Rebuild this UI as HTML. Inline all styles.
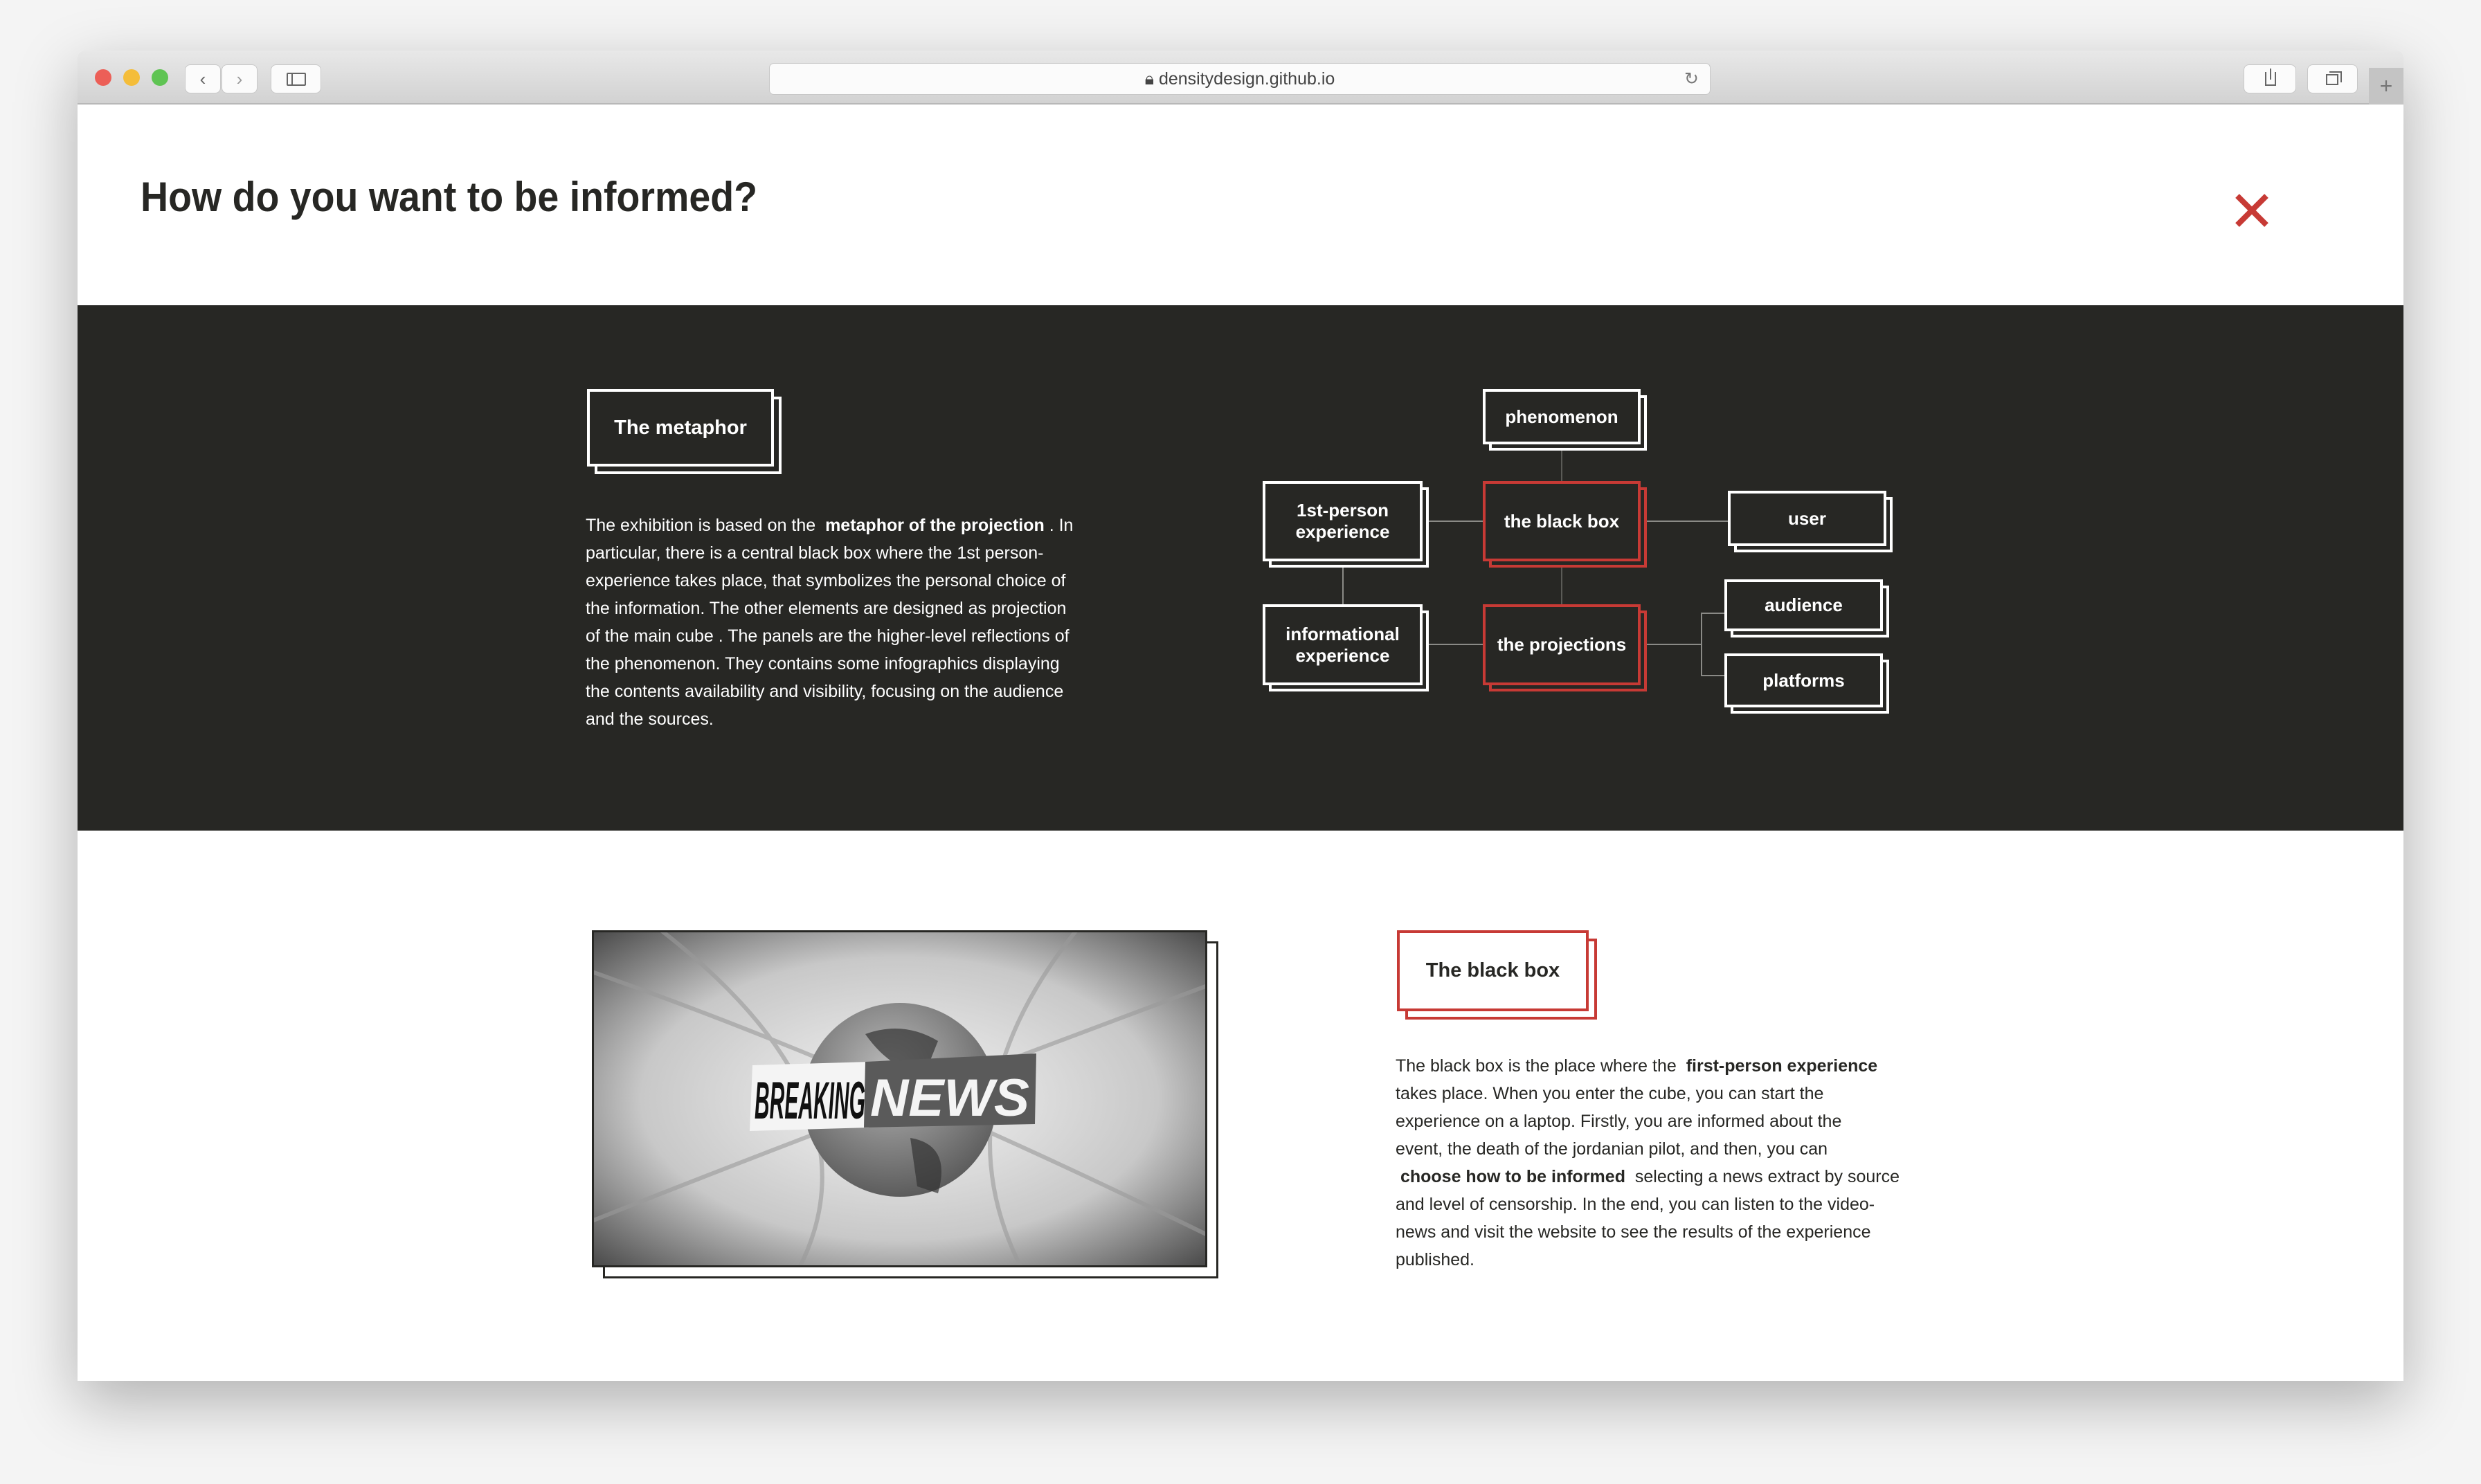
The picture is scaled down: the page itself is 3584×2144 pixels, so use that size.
<!DOCTYPE html>
<html><head><meta charset="utf-8"><style>
*{margin:0;padding:0;box-sizing:border-box}
body{width:3584px;height:2144px;background:#f4f4f4;position:relative;overflow:hidden;font-family:"Liberation Sans",sans-serif}
.abs{position:absolute}
.win{left:112px;top:73px;width:3360px;height:1922px;background:#fff;box-shadow:0 30px 90px rgba(0,0,0,.28);border-radius:10px 10px 0 0;overflow:hidden}
.tb{left:0;top:0;width:3360px;height:78px;background:linear-gradient(#e8e8e8,#d2d2d2);border-bottom:2px solid #b8b8b8}
.dot{width:24px;height:24px;border-radius:50%;top:27px}
.btn{background:#fbfbfb;border:1px solid #c8c8c8;border-radius:8px;height:42px;top:20px}
.dark{left:0;top:368px;width:3360px;height:759px;background:#272724}
.box{position:absolute;border:4px solid #fff;background:#272724;color:#fff;font-weight:bold;font-size:26px;text-align:center;display:flex;align-items:center;justify-content:center;line-height:31px}
.sh{position:absolute;border:4px solid #fff;background:#272724}
.red{border-color:#c73a35}
.ln{position:absolute;background:#8a8a86}
.p{font-size:25px;line-height:40px;white-space:nowrap}
</style></head><body>
<div class="abs win">
 <div class="abs tb">
  <div class="abs dot" style="left:25px;background:#ec5f57"></div>
  <div class="abs dot" style="left:66px;background:#f4bd3a"></div>
  <div class="abs dot" style="left:107px;background:#5fc453"></div>
  <div class="abs btn" style="left:155px;width:52px;font-size:26px;color:#666;text-align:center;line-height:40px">‹</div>
  <div class="abs btn" style="left:208px;width:52px;font-size:26px;color:#999;text-align:center;line-height:40px">›</div>
  <div class="abs btn" style="left:279px;width:73px"><div class="abs" style="left:22px;top:11px;width:28px;height:19px;border:2px solid #666;border-radius:2px"></div><div class="abs" style="left:29px;top:12px;width:2px;height:17px;background:#666"></div></div>
  <div class="abs btn" style="left:999px;width:1360px;top:18px;height:46px;border-radius:7px;text-align:center;font-size:25px;line-height:44px;color:#444">🔒︎ densitydesign.github.io<span class="abs" style="right:16px;top:0;color:#777">↻</span></div>
  <div class="abs btn" style="left:3129px;width:76px"><div class="abs" style="left:30px;top:10px;width:16px;height:20px;border:2px solid #666;border-top:none"></div><div class="abs" style="left:37px;top:5px;width:2px;height:16px;background:#666"></div></div>
  <div class="abs btn" style="left:3221px;width:73px"><div class="abs" style="left:26px;top:13px;width:18px;height:16px;border:2px solid #666"></div><div class="abs" style="left:31px;top:9px;width:18px;height:16px;border:2px solid #666;border-left:none;border-bottom:none"></div></div>
  <div class="abs" style="left:3310px;top:25px;width:50px;height:53px;background:#c4c4c4;color:#777;font-size:32px;text-align:center;line-height:53px">+</div>
 </div>
 <div class="abs" style="left:91px;top:177px;font-size:60px;font-weight:bold;color:#272724;transform:scaleX(.925);transform-origin:left;white-space:nowrap">How do you want to be informed?</div>
 <svg class="abs" style="left:3116px;top:206px" width="50" height="50"><path d="M4 4L46 46M46 4L4 46" stroke="#c73a35" stroke-width="8"/></svg>

 <div class="abs dark">
  <div class="sh" style="left:747px;top:132px;width:270px;height:112px"></div>
  <div class="box" style="left:736px;top:121px;width:270px;height:112px;font-size:29px">The metaphor</div>
  <div class="abs p" style="left:734px;top:298px;color:#fff">The exhibition is based on the &nbsp;<b>metaphor of the projection</b> . In<br>particular, there is a central black box where the 1st person-<br>experience takes place, that symbolizes the personal choice of<br>the information. The other elements are designed as projection<br>of the main cube . The panels are the higher-level reflections of<br>the phenomenon. They contains some infographics displaying<br>the contents availability and visibility, focusing on the audience<br>and the sources.</div>

  <div class="ln" style="left:2143px;top:201px;width:2px;height:53px;background:#5a5a56"></div>
  <div class="ln" style="left:2143px;top:370px;width:2px;height:62px;background:#5a5a56"></div>
  <div class="ln" style="left:1827px;top:370px;width:2px;height:62px"></div>
  <div class="ln" style="left:1943px;top:311px;width:87px;height:2px"></div>
  <div class="ln" style="left:2258px;top:311px;width:126px;height:2px"></div>
  <div class="ln" style="left:1943px;top:489px;width:87px;height:2px"></div>
  <div class="ln" style="left:2258px;top:489px;width:88px;height:2px"></div>
  <div class="ln" style="left:2345px;top:444px;width:2px;height:91px"></div>
  <div class="ln" style="left:2345px;top:444px;width:34px;height:2px"></div>
  <div class="ln" style="left:2345px;top:534px;width:34px;height:2px"></div>

  <div class="sh" style="left:2039px;top:130px;width:228px;height:80px"></div>
  <div class="box" style="left:2030px;top:121px;width:228px;height:80px">phenomenon</div>
  <div class="sh" style="left:1721px;top:263px;width:231px;height:116px"></div>
  <div class="box" style="left:1712px;top:254px;width:231px;height:116px">1st-person<br>experience</div>
  <div class="sh red" style="left:2039px;top:263px;width:228px;height:116px"></div>
  <div class="box red" style="left:2030px;top:254px;width:228px;height:116px">the black box</div>
  <div class="sh" style="left:2393px;top:277px;width:229px;height:80px"></div>
  <div class="box" style="left:2384px;top:268px;width:229px;height:80px">user</div>
  <div class="sh" style="left:1721px;top:441px;width:231px;height:117px"></div>
  <div class="box" style="left:1712px;top:432px;width:231px;height:117px">informational<br>experience</div>
  <div class="sh red" style="left:2039px;top:441px;width:228px;height:117px"></div>
  <div class="box red" style="left:2030px;top:432px;width:228px;height:117px">the projections</div>
  <div class="sh" style="left:2388px;top:405px;width:229px;height:75px"></div>
  <div class="box" style="left:2379px;top:396px;width:229px;height:75px">audience</div>
  <div class="sh" style="left:2388px;top:512px;width:229px;height:78px"></div>
  <div class="box" style="left:2379px;top:503px;width:229px;height:78px">platforms</div>
 </div>

 <div class="abs" style="left:759px;top:1287px;width:889px;height:487px;border:3px solid #272724;background:#fff"></div>
 <svg class="abs" style="left:743px;top:1271px" width="889" height="487" viewBox="0 0 889 487">
  <defs><radialGradient id="g" cx=".5" cy=".5" r=".7"><stop offset="0" stop-color="#f4f4f4"/><stop offset=".6" stop-color="#c8c8c8"/><stop offset="1" stop-color="#4a4a4a"/></radialGradient>
  <radialGradient id="gl" cx=".45" cy=".35" r=".7"><stop offset="0" stop-color="#bbb"/><stop offset="1" stop-color="#555"/></radialGradient></defs>
  <rect width="889" height="487" fill="url(#g)"/>
  <path d="M0 420 Q300 300 889 80 M0 60 Q400 200 889 440 M100 0 Q420 250 300 487 M700 0 Q500 250 620 487" stroke="#999" stroke-width="6" fill="none" opacity=".6"/>
  <circle cx="445" cy="245" r="140" fill="url(#gl)"/>
  <path d="M395 150 Q450 130 500 160 L480 210 Q430 200 395 150Z M460 300 Q520 310 500 380 L470 370Z" fill="#333" opacity=".7"/>
  <polygon points="232,195 400,190 400,285 228,290" fill="#f4f4f4"/>
  <polygon points="395,190 642,178 640,280 393,285" fill="#5a5a5a"/>
  <text x="235" y="272" font-family="Liberation Sans" font-weight="bold" font-style="italic" font-size="76" fill="#111" textLength="160" lengthAdjust="spacingAndGlyphs">BREAKING</text>
  <text x="402" y="268" font-family="Liberation Sans" font-weight="bold" font-style="italic" font-size="76" fill="#f4f4f4" textLength="230" lengthAdjust="spacingAndGlyphs">NEWS</text>
  <rect x="1.5" y="1.5" width="886" height="484" fill="none" stroke="#272724" stroke-width="3"/>
 </svg>

 <div class="sh red" style="left:1918px;top:1283px;width:277px;height:117px;background:#fff"></div>
 <div class="box red" style="left:1906px;top:1271px;width:277px;height:117px;background:#fff;color:#272724;font-size:29px">The black box</div>
 <div class="abs p" style="left:1904px;top:1447px;color:#272724">The black box is the place where the &nbsp;<b>first-person experience</b><br>takes place. When you enter the cube, you can start the<br>experience on a laptop. Firstly, you are informed about the<br>event, the death of the jordanian pilot, and then, you can<br>&nbsp;<b>choose how to be informed</b> &nbsp;selecting a news extract by source<br>and level of censorship. In the end, you can listen to the video-<br>news and visit the website to see the results of the experience<br>published.</div>
</div>
</body></html>
